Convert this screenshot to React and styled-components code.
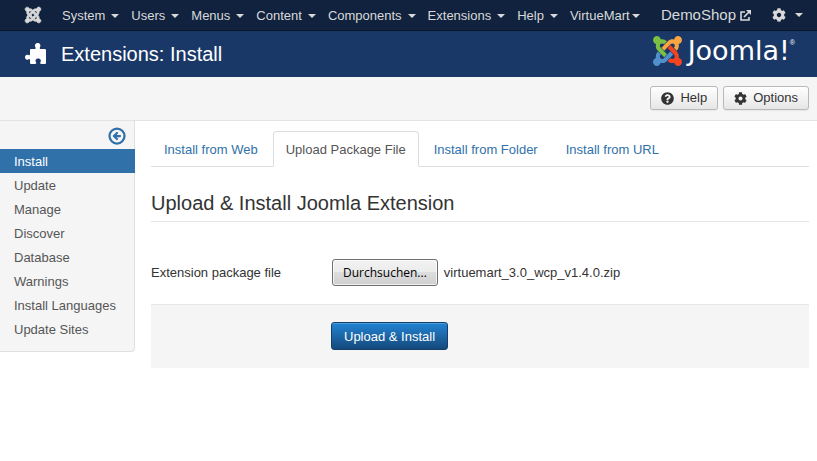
import React, { useRef, useState } from "react";
import styled, { createGlobalStyle } from "styled-components";
import { CircleArrowLeft } from "lucide-react";
import { FaCog, FaJoomla, FaQuestionCircle } from "react-icons/fa";

const GlobalStyle = createGlobalStyle`
  *, *::before, *::after { box-sizing: border-box; }
  body {
    margin: 0;
    background: #fff;
    color: #333;
    font: 13px/18px "Liberation Sans", Arial, sans-serif;
  }
  button { font: inherit; cursor: pointer; }
  a { text-decoration: none; }
  ul { list-style: none; margin: 0; padding: 0; }
`;

const NavBar = styled.nav`
  display: flex;
  align-items: center;
  height: 31px;
  padding: 0 14px 0 24px;
  background: #10223e;
  border-bottom: 1px solid #0b1526;
  color: #d9d9d9;
  white-space: nowrap;
`;

const HomeLink = styled.a`
  display: flex;
  width: 38px;
  color: #d9d9d9;
`;

const MenuList = styled.ul`
  display: flex;
  flex: 1;
  gap: 12px;
  padding-top: 2px;
`;

const MenuButton = styled.button`
  display: flex;
  align-items: center;
  gap: ${(p) => (p.$tight ? "2px" : "6px")};
  padding: 0;
  border: 0;
  background: none;
  color: inherit;
  line-height: 18px;
`;

const Caret = styled.span`
  border: 4px solid transparent;
  border-top-color: currentColor;
  border-bottom: 0;
`;

const SiteTools = styled.div`
  display: flex;
  align-items: center;
  gap: 21px;
`;

const SiteLink = styled.a`
  display: flex;
  align-items: center;
  gap: 4px;
  color: #d9d9d9;
  font-size: 15px;
`;

const SettingsButton = styled(MenuButton)`
  gap: 9px;
`;

const TitleBar = styled.header`
  display: flex;
  align-items: center;
  justify-content: space-between;
  height: 46px;
  padding: 0 22px 0 25px;
  background: #1a3867;
  color: #fff;
`;

const PageTitle = styled.h1`
  display: flex;
  align-items: center;
  gap: 14px;
  margin: 0;
  font-size: 20px;
  line-height: 24px;
  font-weight: 400;
`;

const Logo = styled.div`
  display: flex;
  align-items: center;
  gap: 6px;
  padding-bottom: 6px;
`;

const Wordmark = styled.span`
  display: flex;
  font: 400 27px/30px "DejaVu Sans", sans-serif;
`;

const Registered = styled.span`
  font: 7px/14px "Liberation Sans", sans-serif;
`;

const Toolbar = styled.div`
  display: flex;
  justify-content: flex-end;
  gap: 5px;
  padding: 9px 8px 10px;
  background: #f5f5f5;
  border-bottom: 1px solid #e3e3e3;
`;

const ToolButton = styled.button`
  display: flex;
  align-items: center;
  gap: 6px;
  height: 24px;
  padding: 0 10px;
  border: 1px solid #b9b9b9;
  border-radius: 3px;
  background: linear-gradient(#fff, #e6e6e6);
  box-shadow: 0 1px 1px rgba(0, 0, 0, 0.06);
  color: #333;
`;

const Body = styled.div`
  display: flex;
  align-items: flex-start;
`;

const Sidebar = styled.aside`
  flex: 0 0 135px;
  padding-bottom: 10px;
  background: #f5f5f5;
  border: solid #e0e0e0;
  border-width: 0 1px 1px 0;
  border-bottom-right-radius: 4px;
`;

const CollapseButton = styled.button`
  display: flex;
  align-items: center;
  height: 28px;
  margin-left: auto;
  padding: 2px 8px 0;
  border: 0;
  background: none;
  color: #3071a9;
`;

const SideLink = styled.a`
  display: block;
  margin-right: -1px;
  padding: 4px 14px 2px;
  background: ${(p) => (p.$active ? "#3071a9" : "transparent")};
  color: ${(p) => (p.$active ? "#fff" : "#555")};
`;

const Main = styled.main`
  flex: 1;
  min-width: 0;
  padding: 10px 8px 0 16px;
`;

const TabList = styled.div`
  display: flex;
  gap: 2px;
  border-bottom: 1px solid #ddd;
`;

const Tab = styled.button`
  margin-bottom: -1px;
  padding: 9px 12px 7px;
  border: 1px solid ${(p) => (p.$active ? "#ddd" : "transparent")};
  border-bottom-color: ${(p) => (p.$active ? "#fff" : "transparent")};
  border-radius: 4px 4px 0 0;
  background: ${(p) => (p.$active ? "#fff" : "transparent")};
  color: ${(p) => (p.$active ? "#555" : "#3071a9")};
`;

const SectionTitle = styled.h2`
  margin: 21px 0 37px;
  padding-bottom: 3px;
  border-bottom: 1px solid #e5e5e5;
  font-size: 20px;
  line-height: 30px;
  font-weight: 400;
`;

const FieldRow = styled.div`
  display: flex;
  align-items: center;
`;

const FieldLabel = styled.label`
  flex: 0 0 181px;
`;

const FilePicker = styled.div`
  display: flex;
  align-items: center;
  gap: 6px;
`;

const FileInput = styled.input`
  display: none;
`;

const BrowseButton = styled.button`
  height: 27px;
  padding: 0 10px;
  border: 1px solid #707070;
  border-radius: 3px;
  background: linear-gradient(#f2f2f2, #ebebeb 50%, #dddddd 50%, #cfcfcf);
  box-shadow: inset 0 0 0 1px rgba(255, 255, 255, 0.7);
  color: #000;
  font: 12px/18px "Open Sans", "Noto Sans", sans-serif;
`;

const Actions = styled.div`
  margin-top: 18px;
  padding: 17px 0 18px 180px;
  background: #f5f5f5;
  border-top: 1px solid #e5e5e5;
`;

const PrimaryButton = styled.button`
  display: block;
  height: 28px;
  padding: 2px 12px 0;
  border: 1px solid #12406b;
  border-radius: 3px;
  background: linear-gradient(#2384d3, #15497c);
  box-shadow: inset 0 1px 0 rgba(255, 255, 255, 0.2);
  color: #fff;
`;

const menus = ["System", "Users", "Menus", "Content", "Components", "Extensions", "Help", "VirtueMart"];
const sections = ["Install", "Update", "Manage", "Discover", "Database", "Warnings", "Install Languages", "Update Sites"];
const tabs = ["Install from Web", "Upload Package File", "Install from Folder", "Install from URL"];

function PuzzleIcon() {
  return (
    <svg width="22" height="22" viewBox="0 0 22 22" fill="currentColor" aria-hidden="true">
      <path fillRule="evenodd" d="M6 6h3c1.800 0 2-.8 1.400-1.800C9.200 2 10.700 0 12.700 0s3.500 2 2.300 4.200c-.6 1-.4 1.800 1.400 1.800h3.100c1 0 1.500.5 1.500 1.500v12c0 1-.5 1.500-1.500 1.500h-3c-1.300 0-1.700-.7-1-1.900 1-1.800-.2-3.600-2.300-3.600s-3.300 1.800-2.300 3.600c.7 1.200.3 1.900-1 1.900H6.500C5.500 21 5 20.500 5 19.500v-2.300c0-1.200-.6-1.400-1.600-.8C1.600 17.300 0 16.100 0 14.200s1.600-3.100 3.400-2.200c1 .6 1.600.4 1.600-.8V7.500C5 6.500 5.300 6 6 6z" />
    </svg>
  );
}

function ExternalIcon() {
  return (
    <svg width="11" height="11" viewBox="0 0 11 11" fill="none" stroke="currentColor" aria-hidden="true">
      <path strokeWidth="1.600" d="M5 2H1v8h8V7M4 7l5-5" />
      <path fill="currentColor" stroke="none" d="M6 0h5v5z" />
    </svg>
  );
}

function JoomlaEmblem() {
  return (
    <svg width="29" height="30" viewBox="0 32 448 448" preserveAspectRatio="none" aria-hidden="true">
      <path fill="#7ac143" d="M.6 92.100C.6 58.800 27.400 32 60.400 32c30 0 54.500 21.900 59.200 50.200 32.600-7.600 67.100.6 96.500 30l-44.300 44.300c-20.500-20.500-42.600-16.300-55.400-3.500-14.300 14.300-14.300 37.900 0 52.200l99.500 99.500-44 44.300c-87.700-87.200-49.700-49.700-99.800-99.700-26.800-26.500-35-64.800-24.800-98.900C20.400 144.600.6 120.700.6 92.100z" />
      <path fill="#f9a541" d="M130.100 208.500l44.300 44.300c10-10 89.700-89.700 99.700-99.800 14.300-14.300 37.600-14.300 51.900 0 12.800 12.800 17 35-3.500 55.400l44 44.300c31.200-31.200 38.500-67.600 28.900-101.200 29.200-4.100 51.900-29.200 51.900-59.500 0-33.200-26.800-60.100-59.800-60.100-30.300 0-55.400 22.500-59.500 51.600-33.800-9.900-71.700-1.500-98.300 25.100-18.300 19.100-71.100 71.500-99.600 99.900z" />
      <path fill="#f44321" d="M396.400 360.700c8.200-32.700-.9-68.500-26.300-93.900-11.800-12.200 5 4.700-99.500-99.700l-44.300 44.300 99.700 99.700c14.300 14.300 14.300 37.600 0 51.900-12.800 12.800-35 17-55.400-3.500l-44 44.300c27.600 30.200 68 38.800 102.700 28 5.500 27.400 29.700 48.100 58.900 48.100 33 0 59.800-26.800 59.800-60.100 0-30.200-22.500-55-51.600-59.100z" />
      <path fill="#5091cd" d="M312.100 307.600l-44-44.300c-87 86.400-50.400 50.400-99.700 99.800-14.300 14.300-37.600 14.300-51.900 0-13.100-13.400-16.900-35.300 3.200-55.400l-44-44.300c-30.200 30.200-38 65.200-29.500 98.300-26.700 6-46.200 29.900-46.200 58.200C0 453.200 26.800 480 59.800 480c28.600 0 52.500-19.800 58.600-46.700 32.700 8.200 68.500-.6 94.200-26 32.100-32 12.200-12.400 99.500-99.700z" />
    </svg>
  );
}

export default function App() {
  const picker = useRef(null);
  const [fileName, setFileName] = useState("virtuemart_3.0_wcp_v1.4.0.zip");
  const [activeTab, setActiveTab] = useState("Upload Package File");

  return (
    <>
      <GlobalStyle />
      <NavBar>
        <HomeLink href="#" aria-label="Control Panel"><FaJoomla size={18} stroke="currentColor" strokeWidth={20} /></HomeLink>
        <MenuList>
          {menus.map((name) => (
            <li key={name}>
              <MenuButton type="button" $tight={name === "VirtueMart"}>{name}<Caret /></MenuButton>
            </li>
          ))}
        </MenuList>
        <SiteTools>
          <SiteLink href="#">DemoShop<ExternalIcon /></SiteLink>
          <SettingsButton type="button" aria-label="Settings"><FaCog size={14} /><Caret /></SettingsButton>
        </SiteTools>
      </NavBar>

      <TitleBar>
        <PageTitle><PuzzleIcon />Extensions: Install</PageTitle>
        <Logo>
          <JoomlaEmblem />
          <Wordmark>Joomla!<Registered>®</Registered></Wordmark>
        </Logo>
      </TitleBar>

      <Toolbar>
        <ToolButton type="button"><FaQuestionCircle size={13} />Help</ToolButton>
        <ToolButton type="button"><FaCog size={13} />Options</ToolButton>
      </Toolbar>

      <Body>
        <Sidebar>
          <CollapseButton type="button" aria-label="Hide sidebar"><CircleArrowLeft size={18} strokeWidth={3} /></CollapseButton>
          <ul>
            {sections.map((name) => (
              <li key={name}><SideLink href="#" $active={name === "Install"}>{name}</SideLink></li>
            ))}
          </ul>
        </Sidebar>

        <Main>
          <TabList role="tablist">
            {tabs.map((name) => (
              <Tab
                key={name}
                type="button"
                role="tab"
                aria-selected={name === activeTab}
                $active={name === activeTab}
                onClick={() => setActiveTab(name)}
              >
                {name}
              </Tab>
            ))}
          </TabList>
          <SectionTitle>Upload &amp; Install Joomla Extension</SectionTitle>
          <FieldRow>
            <FieldLabel htmlFor="package">Extension package file</FieldLabel>
            <FilePicker>
              <FileInput
                id="package"
                type="file"
                ref={picker}
                onChange={(e) => e.target.files[0] && setFileName(e.target.files[0].name)}
              />
              <BrowseButton type="button" onClick={() => picker.current.click()}>Durchsuchen...</BrowseButton>
              <span>{fileName}</span>
            </FilePicker>
          </FieldRow>
          <Actions>
            <PrimaryButton type="button">Upload &amp; Install</PrimaryButton>
          </Actions>
        </Main>
      </Body>
    </>
  );
}
